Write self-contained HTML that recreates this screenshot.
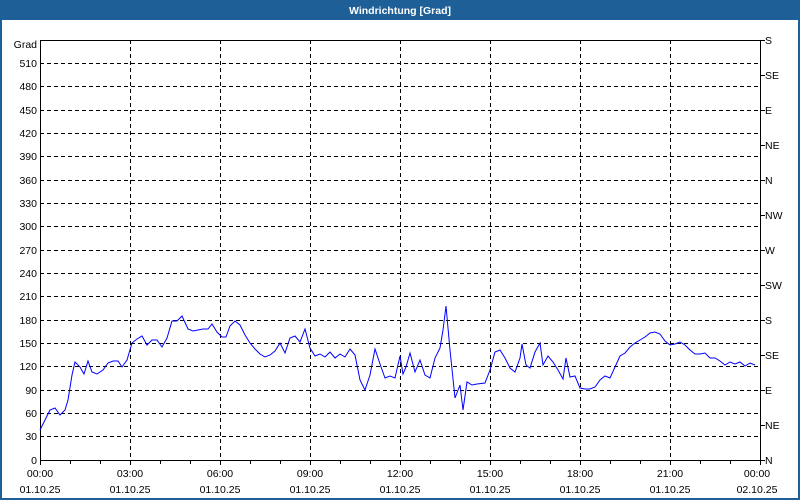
<!DOCTYPE html>
<html><head><meta charset="utf-8"><style>
html,body{margin:0;padding:0;width:800px;height:500px;overflow:hidden;background:#fff}
</style></head><body>
<svg width="800" height="500" xmlns="http://www.w3.org/2000/svg" font-family="Liberation Sans, sans-serif" font-size="10.5">
<rect x="0" y="0" width="800" height="500" fill="#fff"/>
<rect x="0" y="0" width="800" height="20" fill="#1d5f96"/>
<rect x="0" y="0" width="2" height="500" fill="#1d5f96"/>
<rect x="798" y="0" width="2" height="500" fill="#1d5f96"/>
<rect x="0" y="498" width="800" height="2" fill="#1d5f96"/>
<text x="400" y="14" text-anchor="middle" fill="#fff" font-weight="bold" font-size="10.5">Windrichtung [Grad]</text>
<g stroke="#000" stroke-dasharray="4,3" stroke-width="1">
<line x1="40" x2="760" y1="63.5" y2="63.5"/><line x1="40" x2="760" y1="86.5" y2="86.5"/><line x1="40" x2="760" y1="110.5" y2="110.5"/><line x1="40" x2="760" y1="133.5" y2="133.5"/><line x1="40" x2="760" y1="156.5" y2="156.5"/><line x1="40" x2="760" y1="180.5" y2="180.5"/><line x1="40" x2="760" y1="203.5" y2="203.5"/><line x1="40" x2="760" y1="226.5" y2="226.5"/><line x1="40" x2="760" y1="250.5" y2="250.5"/><line x1="40" x2="760" y1="273.5" y2="273.5"/><line x1="40" x2="760" y1="296.5" y2="296.5"/><line x1="40" x2="760" y1="320.5" y2="320.5"/><line x1="40" x2="760" y1="343.5" y2="343.5"/><line x1="40" x2="760" y1="366.5" y2="366.5"/><line x1="40" x2="760" y1="390.5" y2="390.5"/><line x1="40" x2="760" y1="413.5" y2="413.5"/><line x1="40" x2="760" y1="436.5" y2="436.5"/>
<line x1="130.5" x2="130.5" y1="40" y2="460"/><line x1="220.5" x2="220.5" y1="40" y2="460"/><line x1="310.5" x2="310.5" y1="40" y2="460"/><line x1="400.5" x2="400.5" y1="40" y2="460"/><line x1="490.5" x2="490.5" y1="40" y2="460"/><line x1="580.5" x2="580.5" y1="40" y2="460"/><line x1="670.5" x2="670.5" y1="40" y2="460"/>
</g>
<rect x="40.5" y="40.5" width="720" height="420" fill="none" stroke="#000" stroke-width="1"/>
<g stroke="#000">
<path d="M40.5 460v5M70.5 460v4M100.5 460v4M130.5 460v5M160.5 460v4M190.5 460v4M220.5 460v5M250.5 460v4M280.5 460v4M310.5 460v5M340.5 460v4M370.5 460v4M400.5 460v5M430.5 460v4M460.5 460v4M490.5 460v5M520.5 460v4M550.5 460v4M580.5 460v5M610.5 460v4M640.5 460v4M670.5 460v5M700.5 460v4M730.5 460v4M760.5 460v5"/>
<path d="M760 40.5h5M760 75.5h5M760 110.5h5M760 145.5h5M760 180.5h5M760 215.5h5M760 250.5h5M760 285.5h5M760 320.5h5M760 355.5h5M760 390.5h5M760 425.5h5M760 460.5h5"/>
</g>
<g text-anchor="end" fill="#000">
<text x="37" y="48">Grad</text>
<text x="37" y="67">510</text><text x="37" y="90">480</text><text x="37" y="114">450</text><text x="37" y="137">420</text><text x="37" y="160">390</text><text x="37" y="184">360</text><text x="37" y="207">330</text><text x="37" y="230">300</text><text x="37" y="254">270</text><text x="37" y="277">240</text><text x="37" y="300">210</text><text x="37" y="324">180</text><text x="37" y="347">150</text><text x="37" y="370">120</text><text x="37" y="394">90</text><text x="37" y="417">60</text><text x="37" y="440">30</text><text x="37" y="464">0</text>
</g>
<g fill="#000">
<text x="765" y="44">S</text><text x="765" y="79">SE</text><text x="765" y="114">E</text><text x="765" y="149">NE</text><text x="765" y="184">N</text><text x="765" y="219">NW</text><text x="765" y="254">W</text><text x="765" y="289">SW</text><text x="765" y="324">S</text><text x="765" y="359">SE</text><text x="765" y="394">E</text><text x="765" y="429">NE</text><text x="765" y="464">N</text>
</g>
<g text-anchor="middle" fill="#000">
<text x="40" y="477">00:00</text><text x="130" y="477">03:00</text><text x="220" y="477">06:00</text><text x="310" y="477">09:00</text><text x="400" y="477">12:00</text><text x="490" y="477">15:00</text><text x="580" y="477">18:00</text><text x="670" y="477">21:00</text><text x="757" y="477">00:00</text>
<text x="40" y="493">01.10.25</text><text x="130" y="493">01.10.25</text><text x="220" y="493">01.10.25</text><text x="310" y="493">01.10.25</text><text x="400" y="493">01.10.25</text><text x="490" y="493">01.10.25</text><text x="580" y="493">01.10.25</text><text x="670" y="493">01.10.25</text><text x="757" y="493">02.10.25</text>
</g>
<polyline fill="none" stroke="#0000ff" stroke-width="1" points="40,430 45,420 50,410 55,408 60,415 65,410 68,400 72,375 75,362 80,367 84,374 88,361 92,372 97,374 103,370 108,363 113,361 118,361 122,367 127,360 132,343 137,339 142,336 147,345 152,340 157,340 162,347 167,338 172,321 177,321 182,316 188,329 193,331 198,330 203,329 208,329 212,324 217,332 222,337 226,337 230,326 235,321 240,325 245,335 250,343 255,349 260,354 265,357 270,355 275,351 280,343 285,353 290,338 295,336 300,342 305,329 310,348 315,356 320,354 325,357 330,352 335,358 340,354 345,357 350,349 355,355 360,380 365,390 370,375 375,349 380,364 385,378 390,376 395,378 400,356 403,374 406,367 410,353 415,372 420,360 425,375 430,378 435,358 440,348 443,330 446,306 450,350 455,398 460,385 463,410 467,382 472,385 477,384 485,383 490,370 495,352 500,350 505,358 510,368 515,372 520,358 522,344 526,365 530,368 535,352 540,343 543,365 548,356 553,362 558,370 563,379 566,358 570,377 575,376 580,388 585,389 590,389 595,387 600,380 605,376 610,378 615,367 620,356 625,353 630,347 635,343 640,340 645,337 650,333 655,332 660,334 665,341 670,345 675,344 680,342 685,345 690,350 695,354 700,354 705,353 710,358 715,358 720,361 725,365 730,362 735,364 740,362 745,366 750,363 755,365"/>
</svg>
</body></html>
